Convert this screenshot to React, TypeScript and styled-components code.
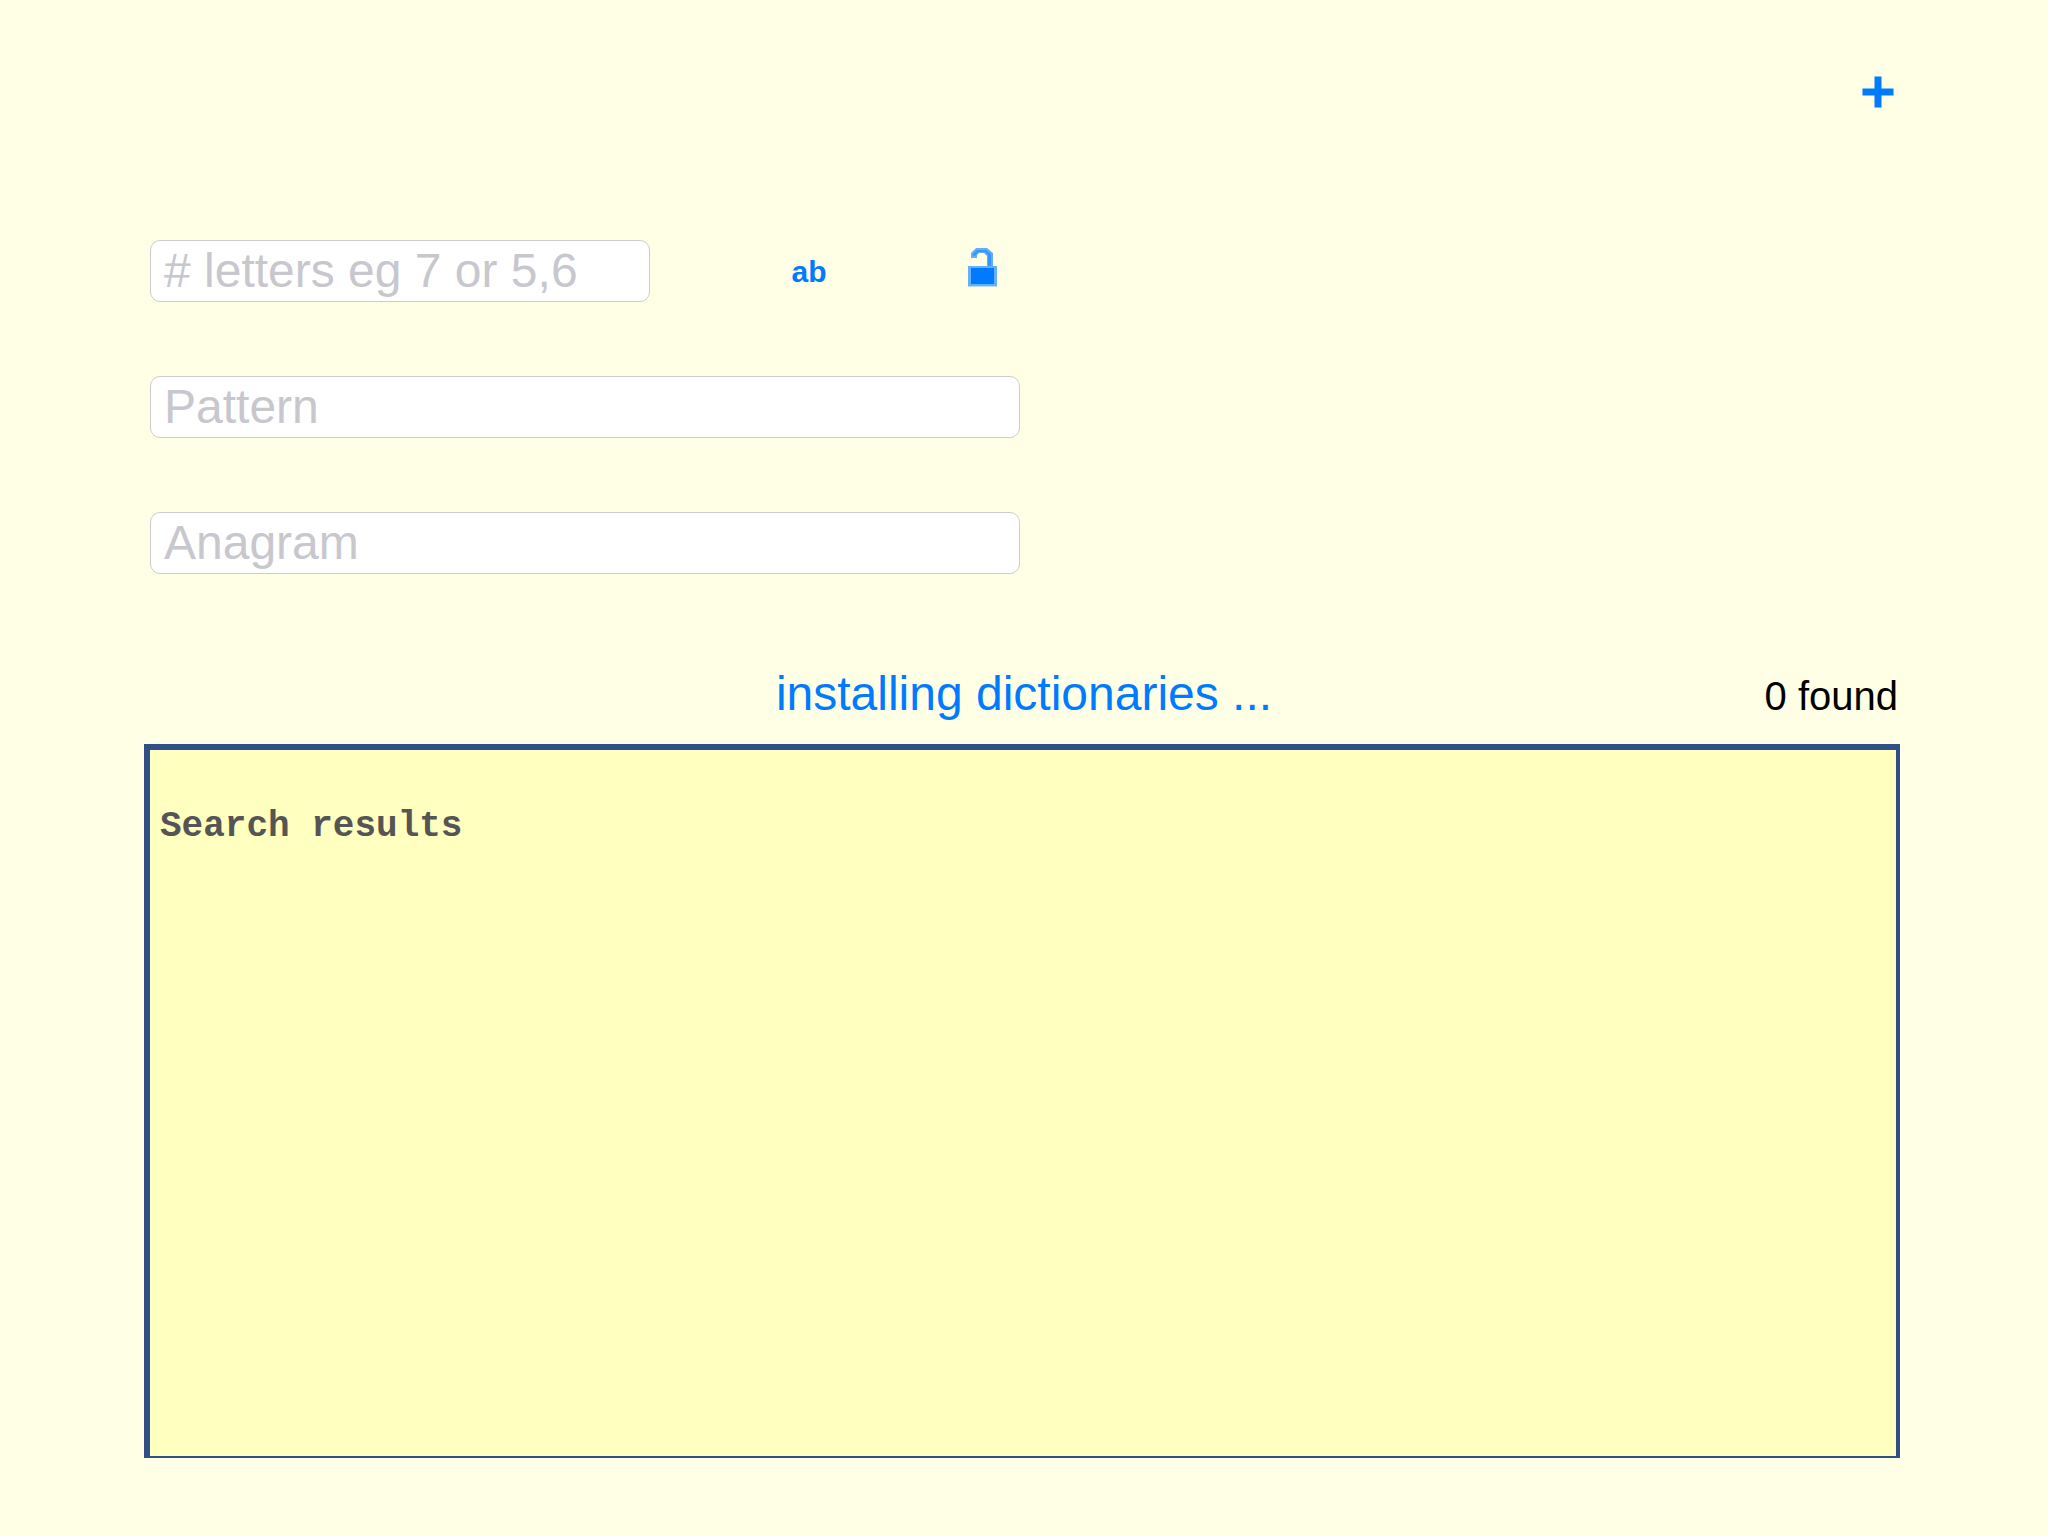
import React from "react";
import styled, { createGlobalStyle } from "styled-components";

const GlobalStyle = createGlobalStyle`
  *, *::before, *::after { box-sizing: border-box; }
  body {
    margin: 0;
    background: #ffffe5;
    font-family: "Liberation Sans", Arial, Helvetica, sans-serif;
  }
`;

const Page = styled.main`
  display: flex;
  flex-direction: column;
  min-height: 100vh;
  padding: 62px 148px 78px 144px;
`;

const Header = styled.header`
  display: flex;
  justify-content: flex-end;
  margin-bottom: 118px;
`;

const IconButton = styled.button`
  display: flex;
  align-items: center;
  justify-content: flex-start;
  height: 60px;
  padding: 0;
  border: 0;
  background: none;
  color: #007aff;
  cursor: pointer;
`;

const AddButton = styled(IconButton)`
  justify-content: center;
  width: 44px;
`;

const Columns = styled.div`
  display: grid;
  grid-template-columns: 1fr 1fr;
  gap: 4px;
`;

const SearchForm = styled.form`
  display: grid;
  gap: 74px;
  padding-left: 6px;
`;

const LengthRow = styled.div`
  display: grid;
  grid-template-columns: minmax(0, 1fr) 318px 52px;
  align-items: center;
`;

const Field = styled.input`
  width: 100%;
  height: 62px;
  padding: 0 13px 2px;
  border: 1px solid #cccccc;
  border-radius: 10px;
  background: #ffffff;
  color: #000000;
  font: 48px "Liberation Sans", Arial, Helvetica, sans-serif;

  &::placeholder {
    color: #c7c7cd;
    opacity: 1;
  }
`;

const CaseButton = styled(IconButton)`
  justify-content: center;
  justify-self: center;
  width: 76px;
  padding-top: 2px;
  font: bold 30px "Liberation Sans", Arial, Helvetica, sans-serif;
`;

const StatusRow = styled.div`
  display: grid;
  grid-template-columns: 1fr auto 1fr;
  align-items: baseline;
  margin: 92px 0 20px;
  padding: 0 2px 0 6px;
  line-height: 56px;
`;

const Status = styled.p`
  grid-column: 2;
  margin: 0;
  color: #007aff;
  font-size: 48px;
`;

const Count = styled.p`
  justify-self: end;
  margin: 0;
  color: #000000;
  font-size: 40px;
`;

const Results = styled.textarea`
  display: block;
  flex: 1;
  width: 100%;
  min-height: 240px;
  padding: 56px 10px;
  border-style: solid;
  border-color: #2f4f86;
  border-width: 6px 4px 2px 6px;
  border-radius: 0;
  outline: 0;
  resize: none;
  background: #ffffbf;
  color: #555555;
  font: bold 36px/42px "Liberation Mono", "Courier New", Courier, monospace;
`;

const PlusIcon = () => (
  <svg width="32" height="32" viewBox="0 0 32 32" aria-hidden="true">
    <path d="M12.5 0.5h7v12h12v7h-12v12h-7v-12h-12v-7h12z" fill="currentColor" />
  </svg>
);

const UnlockIcon = () => (
  <svg width="30" height="46" viewBox="0 0 30 46" aria-hidden="true">
    <path d="M3 10V5l5-5h11l6 5v14h-6V8l-3-3h-5l-2 2v3z" fill="#62aefb" />
    <path d="M4 7l5-5h9l5 4v12h-3V7l-3-3h-7L7 8z" fill="#3397ff" />
    <rect y="18" width="29" height="20" fill="#66b0fa" />
    <rect y="38" width="29" height="1" fill="#b9dcf0" />
    <rect x="3" y="20" width="23" height="16" fill="#007aff" />
  </svg>
);

export default function App() {
  return (
    <>
      <GlobalStyle />
      <Page>
        <Header>
          <AddButton type="button" aria-label="Add">
            <PlusIcon />
          </AddButton>
        </Header>
        <Columns>
          <SearchForm onSubmit={(event) => event.preventDefault()}>
            <LengthRow>
              <Field aria-label="Number of letters" placeholder="# letters eg 7 or 5,6" />
              <CaseButton type="button">ab</CaseButton>
              <IconButton type="button" aria-label="Unlocked">
                <UnlockIcon />
              </IconButton>
            </LengthRow>
            <Field aria-label="Pattern" placeholder="Pattern" />
            <Field aria-label="Anagram" placeholder="Anagram" />
          </SearchForm>
        </Columns>
        <StatusRow>
          <Status role="status">installing dictionaries ...</Status>
          <Count>0 found</Count>
        </StatusRow>
        <Results aria-label="Results" readOnly defaultValue="Search results" />
      </Page>
    </>
  );
}
